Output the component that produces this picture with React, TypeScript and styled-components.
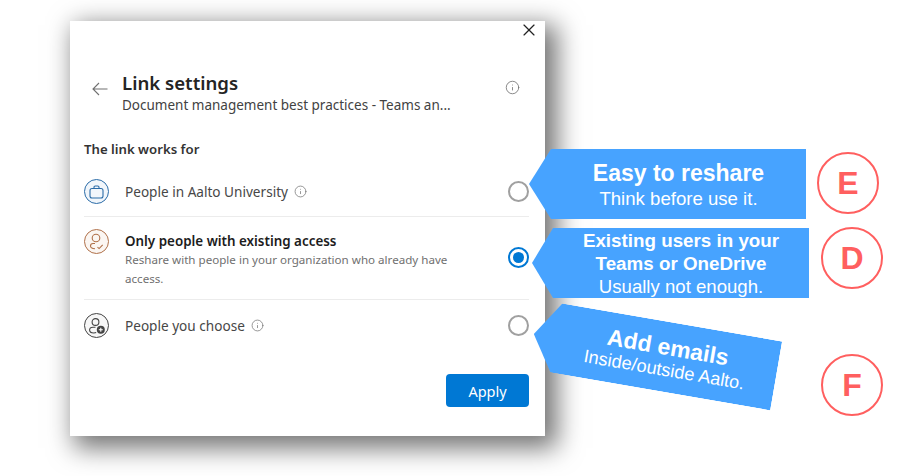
import React from "react";
import styled, { createGlobalStyle } from "styled-components";
import { Info, X } from "lucide-react";

const GlobalStyle = createGlobalStyle`
    html, body {
        margin: 0;
        padding: 0;
        background: #fff;
    }
    body {
        font-family: "Noto Sans", "Open Sans", sans-serif;
    }
`;

const Page = styled.div`
    position: relative;
    width: 912px;
    height: 476px;
    overflow: hidden;
    padding: 21px 0 0 70px;
    box-sizing: border-box;
`;

const Card = styled.div`
    position: relative;
    width: 475px;
    height: 415px;
    background: #fff;
    box-shadow: 8px 8px 24px 4px rgba(0, 0, 0, 0.55);
    padding: 50px 16px 0 14px;
    box-sizing: border-box;
    display: flex;
    flex-direction: column;
`;

const CloseButton = styled.div`
    position: absolute;
    top: -1px;
    right: 6px;
    color: #222;
    display: flex;
`;

const Header = styled.div`
    display: flex;
    align-items: flex-start;
    padding-left: 8px;
`;

const BackIcon = styled.svg`
    width: 16px;
    height: 14px;
    margin: 11px 14px 0 0;
    flex: none;
`;

const Titles = styled.div`
    flex: 1;
    margin-top: -1px;
`;

const Title = styled.div`
    font-size: 18.6px;
    line-height: 26px;
    font-weight: 600;
    color: #242424;
`;

const Subtitle = styled.div`
    font-size: 13.5px;
    line-height: 19px;
    color: #424242;
`;

const HeaderInfo = styled.div`
    color: #707070;
    display: flex;
    margin: 9px 9px 0 0;
`;

const SectionLabel = styled.div`
    font-size: 13.2px;
    line-height: 20px;
    font-weight: 600;
    color: #333;
    margin-top: 24px;
`;

const Row = styled.div<{ $height: number; $padTop: number; $divided?: boolean; $top?: boolean }>`
    display: flex;
    align-items: ${(p) => (p.$top ? "flex-start" : "center")};
    height: ${(p) => p.$height}px;
    padding-top: ${(p) => p.$padTop}px;
    box-sizing: border-box;
    border-bottom: ${(p) => (p.$divided ? "1.5px solid #ececec" : "none")};
`;

const IconCircle = styled.div<{ $color: string; $bg: string }>`
    width: 25px;
    height: 25px;
    border-radius: 50%;
    border: 1.4px solid ${(p) => p.$color};
    background: ${(p) => p.$bg};
    color: ${(p) => p.$color};
    box-sizing: border-box;
    display: flex;
    align-items: center;
    justify-content: center;
    flex: none;
    margin-right: 16px;
`;

const RowBody = styled.div`
    flex: 1;
    min-width: 0;
`;

const RowLabel = styled.div`
    font-size: 13.6px;
    line-height: 18px;
    color: #474747;
    display: flex;
    align-items: center;
    gap: 6px;
`;

const RowLabelInfo = styled.span`
    color: #777;
    display: flex;
`;

const RowTitle = styled.div`
    font-size: 13.4px;
    line-height: 18px;
    font-weight: 600;
    color: #1c1c1c;
    margin-top: 3px;
`;

const RowDesc = styled.div`
    font-size: 11.6px;
    line-height: 19px;
    color: #707070;
    width: 345px;
`;

const Radio = styled.div<{ $checked?: boolean; $offset?: number }>`
    width: 21px;
    height: 21px;
    border-radius: 50%;
    box-sizing: border-box;
    flex: none;
    border: 2px solid ${(p) => (p.$checked ? "#0078d4" : "#a0a0a0")};
    background: #fff;
    display: flex;
    align-items: center;
    justify-content: center;
    margin-top: ${(p) => p.$offset ?? 0}px;

    &::after {
        content: "";
        display: ${(p) => (p.$checked ? "block" : "none")};
        width: 11px;
        height: 11px;
        border-radius: 50%;
        background: #0078d4;
    }
`;

const Footer = styled.div`
    display: flex;
    justify-content: flex-end;
    margin-top: 23px;
`;

const ApplyButton = styled.button`
    width: 83px;
    height: 33px;
    background: #0078d4;
    border: none;
    border-radius: 4px;
    color: #fff;
    font-family: inherit;
    font-size: 14.5px;
    font-weight: 400;
    padding: 0;
`;

/* annotations laid over the screenshot */
const Callout = styled.div<{ $left: number; $top: number; $width: number; $height: number; $notch: number; $rotate?: number }>`
    position: absolute;
    left: ${(p) => p.$left}px;
    top: ${(p) => p.$top}px;
    width: ${(p) => p.$width}px;
    height: ${(p) => p.$height}px;
    background: #47a3ff;
    color: #fff;
    clip-path: polygon(${(p) => p.$notch}px 0, 100% 0, 100% 100%, ${(p) => p.$notch}px 100%, 0 50%);
    transform: rotate(${(p) => p.$rotate ?? 0}deg);
    padding-left: ${(p) => p.$notch}px;
    box-sizing: border-box;
    display: flex;
    flex-direction: column;
    align-items: center;
    justify-content: center;
    font-family: "Liberation Sans", Arial, sans-serif;
    text-align: center;
`;

const CalloutHead = styled.div<{ $size: number; $line: number }>`
    font-size: ${(p) => p.$size}px;
    line-height: ${(p) => p.$line}px;
    font-weight: 700;
`;

const CalloutSub = styled.div<{ $size: number; $line: number }>`
    font-size: ${(p) => p.$size}px;
    line-height: ${(p) => p.$line}px;
`;

const Badge = styled.div<{ $cx: number; $cy: number }>`
    position: absolute;
    left: ${(p) => p.$cx - 31}px;
    top: ${(p) => p.$cy - 31}px;
    width: 62px;
    height: 62px;
    border-radius: 50%;
    border: 2px solid #ff5f5f;
    box-sizing: border-box;
    color: #ff5f5f;
    background: #fff;
    font-family: "Liberation Sans", Arial, sans-serif;
    font-weight: 700;
    font-size: 32px;
    display: flex;
    align-items: center;
    justify-content: center;
`;

function BriefcaseIcon() {
    return (
        <svg width="15" height="14" viewBox="0 0 15 14" fill="none" stroke="currentColor" strokeWidth="1.1">
            <rect x="1" y="3.5" width="13" height="9.5" rx="2" />
            <path d="M5 3.5V2.2C5 1.5 5.5 1 6.2 1h2.6C9.5 1 10 1.5 10 2.2v1.3" />
        </svg>
    );
}

function PersonCheckIcon() {
    return (
        <svg width="17" height="17" viewBox="0 0 17 17" fill="none" stroke="currentColor" strokeWidth="1.1">
            <circle cx="8" cy="5" r="3.8" />
            <path d="M7 10.5H5C3.4 10.5 2.5 11.5 2.5 13c0 1.5 1.6 2.6 4.5 2.8" />
            <path d="M9.5 14.2l1.6 1.4 3.6-3.8" />
        </svg>
    );
}

function PersonAddIcon() {
    return (
        <svg width="18" height="18" viewBox="0 0 18 18" fill="none" stroke="currentColor" strokeWidth="1.1">
            <circle cx="7.5" cy="5" r="3.4" />
            <path d="M7.5 10.2H5C3 10.2 1.6 11.4 1.6 13s1.6 3 4.2 3c1 0 1.8-.1 2.4-.4" />
            <circle cx="12.8" cy="12.8" r="4" fill="currentColor" stroke="none" />
            <path d="M12.8 10.8v4M10.8 12.8h4" stroke="#fff" strokeWidth="1.1" />
        </svg>
    );
}

export default function App() {
    return (
        <Page>
            <GlobalStyle />
            <Card>
                <CloseButton>
                    <X size={20} strokeWidth={1.4} />
                </CloseButton>
                <Header>
                    <BackIcon viewBox="0 0 16 14" fill="none" stroke="#707070" strokeWidth="1.1">
                        <path d="M15.5 7H1M7 1L1 7l6 6" />
                    </BackIcon>
                    <Titles>
                        <Title>Link settings</Title>
                        <Subtitle>Document management best practices - Teams an...</Subtitle>
                    </Titles>
                    <HeaderInfo>
                        <Info size={15} strokeWidth={1.3} />
                    </HeaderInfo>
                </Header>
                <SectionLabel>The link works for</SectionLabel>
                <Row $height={58} $padTop={8} $divided>
                    <IconCircle $color="#2b6ca8" $bg="#f1f6fb">
                        <BriefcaseIcon />
                    </IconCircle>
                    <RowBody>
                        <RowLabel>
                            People in Aalto University
                            <RowLabelInfo>
                                <Info size={13} strokeWidth={1.4} />
                            </RowLabelInfo>
                        </RowLabel>
                    </RowBody>
                    <Radio />
                </Row>
                <Row $height={83} $padTop={12} $divided $top>
                    <IconCircle $color="#b0714a" $bg="#fbf6f2">
                        <PersonCheckIcon />
                    </IconCircle>
                    <RowBody>
                        <RowTitle>Only people with existing access</RowTitle>
                        <RowDesc>Reshare with people in your organization who already have access.</RowDesc>
                    </RowBody>
                    <Radio $checked $offset={18} />
                </Row>
                <Row $height={51} $padTop={0}>
                    <IconCircle $color="#444" $bg="#f7f7f7">
                        <PersonAddIcon />
                    </IconCircle>
                    <RowBody>
                        <RowLabel>
                            People you choose
                            <RowLabelInfo>
                                <Info size={13} strokeWidth={1.4} />
                            </RowLabelInfo>
                        </RowLabel>
                    </RowBody>
                    <Radio />
                </Row>
                <Footer>
                    <ApplyButton>Apply</ApplyButton>
                </Footer>
            </Card>

            <Callout $left={529} $top={149} $width={277} $height={70} $notch={22}>
                <CalloutHead $size={23} $line={29}>Easy to reshare</CalloutHead>
                <CalloutSub $size={18.6} $line={22}>Think before use it.</CalloutSub>
            </Callout>
            <Callout $left={532} $top={228} $width={277} $height={70} $notch={21}>
                <CalloutHead $size={18.8} $line={23}>Existing users in your<br />Teams or OneDrive</CalloutHead>
                <CalloutSub $size={18.6} $line={23}>Usually not enough.</CalloutSub>
            </Callout>
            <Callout $left={532} $top={320} $width={246} $height={70} $notch={23} $rotate={9.8}>
                <CalloutHead $size={23} $line={26}>Add emails</CalloutHead>
                <CalloutSub $size={18.2} $line={20}>Inside/outside Aalto.</CalloutSub>
            </Callout>

            <Badge $cx={848} $cy={183}>E</Badge>
            <Badge $cx={852} $cy={258}>D</Badge>
            <Badge $cx={852} $cy={385}>F</Badge>
        </Page>
    );
}
